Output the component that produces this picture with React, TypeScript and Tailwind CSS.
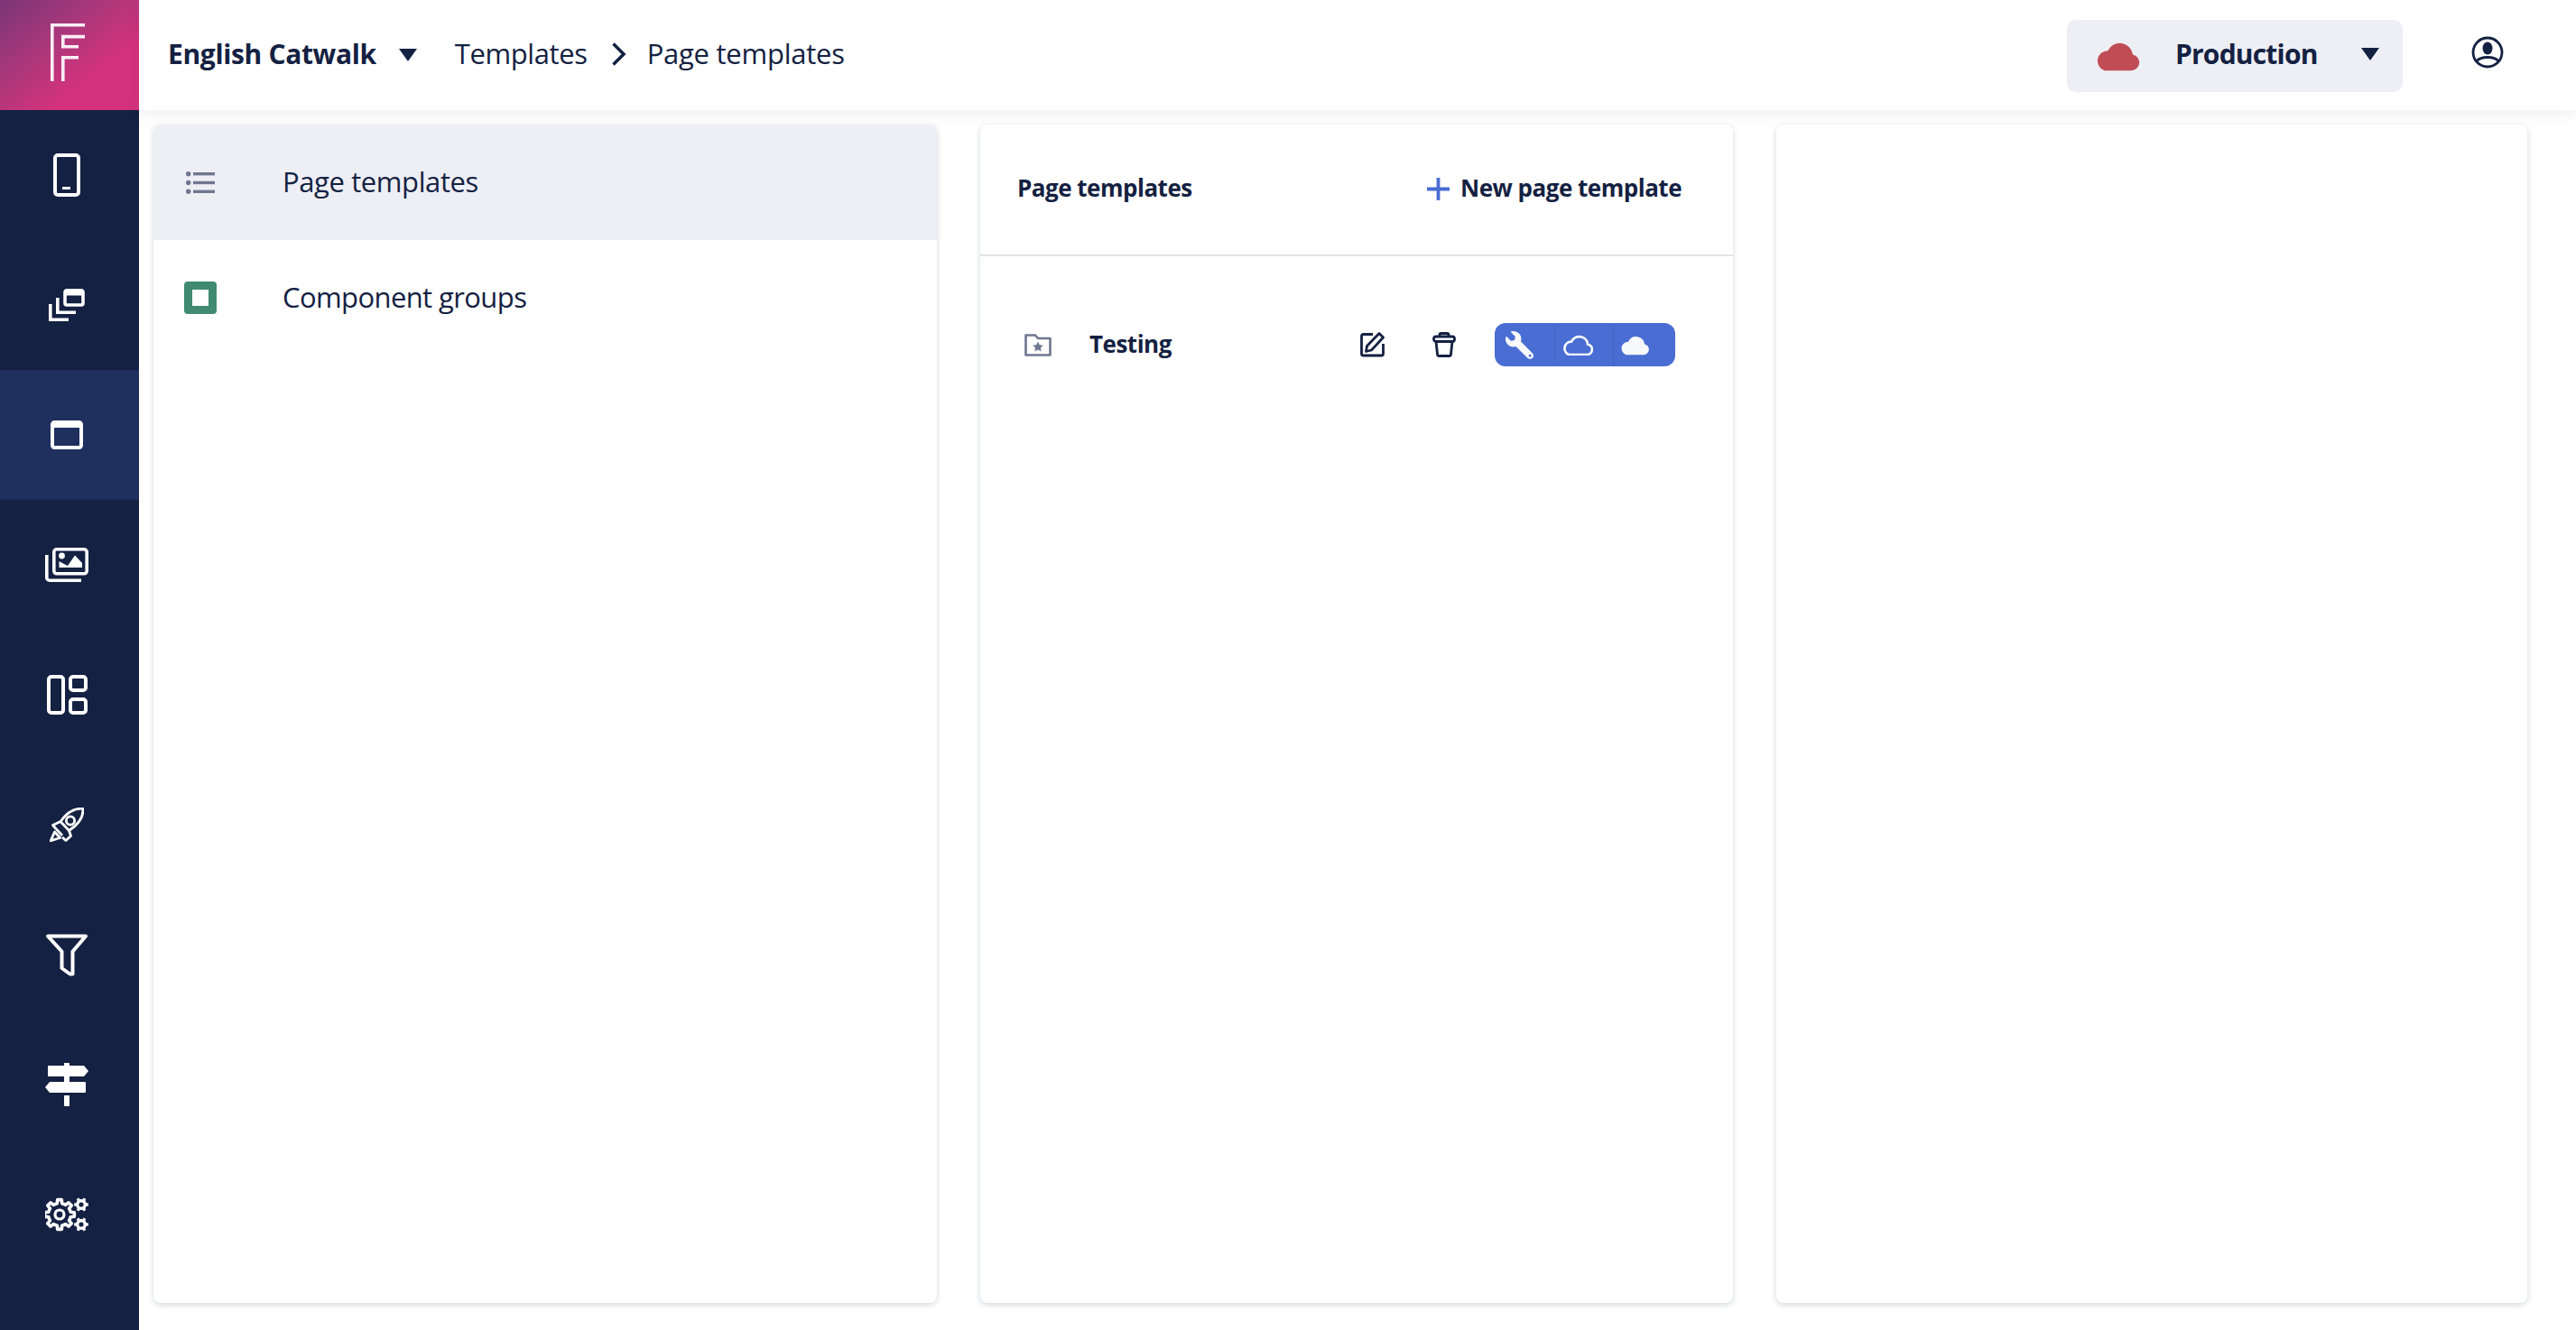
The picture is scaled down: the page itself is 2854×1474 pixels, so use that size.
import React from 'react';
import { FaWrench } from 'react-icons/fa';

const cloud = 'M7 20.5H25.5A5.5 5.5 0 0 0 26.5 9.6A9 9 0 0 0 9.4 6.9A7 7 0 0 0 7 20.5Z';

function gear(cx: number, cy: number, outer: number, inner: number, teeth: number) {
  const pts: string[] = [];
  const step = (Math.PI * 2) / teeth;
  for (let i = 0; i < teeth; i++) {
    const a = i * step;
    const corners: [number, number][] = [
      [inner, a - step * 0.5],
      [inner, a - step * 0.28],
      [outer, a - step * 0.18],
      [outer, a + step * 0.18],
      [inner, a + step * 0.28],
    ];
    corners.forEach(([r, t]) => pts.push(`${(cx + r * Math.cos(t)).toFixed(2)} ${(cy + r * Math.sin(t)).toFixed(2)}`));
  }
  return 'M' + pts.join('L') + 'Z';
}

function Logo() {
  return (
    <svg width="38" height="64" viewBox="0 0 38 64" fill="none" stroke="#fbeef5" strokeWidth="3.6">
      <path d="M1.8 64V1.8H38" />
      <path d="M38 14.6H13.8V25.8H31" />
      <path d="M13.8 64V37.8H31" />
    </svg>
  );
}

function Phone() {
  return (
    <svg width="30" height="48" viewBox="0 0 30 48" fill="none" stroke="white" strokeWidth="4">
      <rect x="2" y="2" width="26" height="44" rx="3" />
      <path d="M10 38.5H19" strokeWidth="3" />
    </svg>
  );
}

function Copies() {
  return (
    <svg width="40" height="36" viewBox="0 0 40 36" fill="none" stroke="white" strokeWidth="3.6">
      <rect x="18" y="2" width="20" height="16" rx="2" />
      <path d="M18 4H38" strokeWidth="7" />
      <path d="M9.8 10V26.2H30" />
      <path d="M1.8 17V34.2H22" />
    </svg>
  );
}

function Browser() {
  return (
    <svg width="36" height="32" viewBox="0 0 36 32" fill="none" stroke="white" strokeWidth="4">
      <rect x="2" y="2" width="32" height="28" rx="2.5" />
      <path d="M2 5H34" strokeWidth="6" />
    </svg>
  );
}

function Images() {
  return (
    <svg width="48" height="38" viewBox="0 0 48 38" fill="none" stroke="white" strokeWidth="3.6">
      <rect x="9.8" y="1.8" width="36.4" height="27" rx="3" />
      <path d="M1.8 8V33.2a3 3 0 0 0 3 3H40" />
      <circle cx="18.5" cy="9" r="3.4" fill="white" stroke="none" />
      <path d="M15.5 22V15L20 17.5L25 20L33 8.5L41 17V22Z" fill="white" stroke="none" />
    </svg>
  );
}

function Panels() {
  return (
    <svg width="45" height="44" viewBox="0 0 45 44" fill="none" stroke="white" strokeWidth="4">
      <rect x="2" y="2" width="16" height="40" rx="3" />
      <rect x="26" y="2" width="17" height="15" rx="3" />
      <rect x="26" y="27" width="17" height="15" rx="3" />
    </svg>
  );
}

function Rocket() {
  return (
    <svg width="38" height="38" viewBox="0 0 38 38" fill="none" stroke="white" strokeWidth="2.8" strokeLinejoin="round">
      <path d="M36.8 1.2C28 0.6 19 5.5 12 15.5L21.5 25.5C32 18.5 37.8 10 36.8 1.2Z" />
      <circle cx="23" cy="14.5" r="4.6" />
      <path d="M12 15.5L3.5 19.5L7 23.5" />
      <path d="M21.5 25.5L23.5 31.5L18 36.5L14 33" />
      <path d="M5.5 27L1.2 36.8L11.5 33.5Z" />
      <path d="M7 23.5L14 31" />
    </svg>
  );
}

function Funnel() {
  return (
    <svg width="48" height="47" viewBox="0 0 48 47" fill="none" stroke="white" strokeWidth="4" strokeLinejoin="round">
      <path d="M3 2.5H45L30.5 19.5V44.5H27.5L18.5 38V19.5Z" />
    </svg>
  );
}

function Signpost() {
  return (
    <svg width="48" height="48" viewBox="0 0 48 48" fill="white">
      <path d="M21 0H27V3H43L48 9L43 15H4a1 1 0 0 1-1-1V4a1 1 0 0 1 1-1H21Z" />
      <path d="M21 15H27V21H44a1 1 0 0 1 1 1V32a1 1 0 0 1-1 1H5L0 27L5 21H21Z" />
      <path d="M21 36H27V47a1 1 0 0 1-1 1H22a1 1 0 0 1-1-1Z" />
    </svg>
  );
}

function Gears() {
  return (
    <svg width="48" height="38" viewBox="0 0 48 38" fill="none">
      <path d={gear(16, 19, 16.5, 12.5, 8)} stroke="white" strokeWidth="3.6" strokeLinejoin="round" />
      <circle cx="16" cy="19" r="5" stroke="white" strokeWidth="3.2" />
      <path d={gear(40, 8, 8, 6, 6)} fill="white" />
      <circle cx="40" cy="8" r="2.6" fill="#142142" />
      <path d={gear(40, 30, 8, 6, 6)} fill="white" />
      <circle cx="40" cy="30" r="2.6" fill="#142142" />
    </svg>
  );
}

function Triangle() {
  return (
    <svg width="20" height="14" viewBox="0 0 20 14" fill="#142142">
      <path d="M0 0H20L10 14Z" />
    </svg>
  );
}

function Chevron() {
  return (
    <svg width="17" height="26" viewBox="0 0 17 26" fill="none" stroke="#142142" strokeWidth="3.6">
      <path d="M2.5 1.5L14 13L2.5 24.5" />
    </svg>
  );
}

function UserIcon() {
  return (
    <svg width="36" height="36" viewBox="0 0 36 36" fill="none" stroke="#142142" strokeWidth="2.8">
      <circle cx="18" cy="18" r="16" />
      <ellipse cx="18" cy="13.5" rx="5.5" ry="7" fill="#142142" stroke="none" />
      <path d="M5.5 28C9 24 14 23.5 18 23.5C22 23.5 27 24 30.5 28" />
    </svg>
  );
}

function ListIcon() {
  return (
    <svg width="32" height="25" viewBox="0 0 32 25" fill="#6f7690">
      <circle cx="2.7" cy="2.7" r="2.7" />
      <circle cx="2.7" cy="12.5" r="2.7" />
      <circle cx="2.7" cy="22.3" r="2.7" />
      <rect x="8" y="1" width="24" height="3.4" />
      <rect x="8" y="10.8" width="24" height="3.4" />
      <rect x="8" y="20.6" width="24" height="3.4" />
    </svg>
  );
}

function FolderStar() {
  return (
    <svg width="30" height="25" viewBox="0 0 30 25" fill="none" stroke="#6f7690" strokeWidth="2.6" strokeLinejoin="round">
      <path d="M1.5 23.5V1.5H12L15 5H28.5V23.5Z" />
      <path d="M15 8.5L16.8 12.2L20.8 12.7L17.9 15.5L18.6 19.5L15 17.6L11.4 19.5L12.1 15.5L9.2 12.7L13.2 12.2Z" fill="#6f7690" stroke="none" />
    </svg>
  );
}

function EditIcon() {
  return (
    <svg width="27" height="28" viewBox="0 0 27 28" fill="none" stroke="#142142" strokeWidth="2.8" strokeLinejoin="round">
      <path d="M14 2.5H3.5a2 2 0 0 0-2 2V24a2 2 0 0 0 2 2H23.5a2 2 0 0 0 2-2V13" />
      <path d="M21 1.5L25.5 6L12.5 20L6.5 21.5L7.5 15.5Z" />
    </svg>
  );
}

function TrashIcon() {
  return (
    <svg width="26" height="28" viewBox="0 0 26 28" fill="none" stroke="#142142" strokeWidth="2.8" strokeLinejoin="round">
      <path d="M8 5V3a1.5 1.5 0 0 1 1.5-1.5H16.5A1.5 1.5 0 0 1 18 3V5" />
      <rect x="1.5" y="5" width="23" height="5.5" rx="2.5" />
      <path d="M4 10.5L5.5 24.5a2 2 0 0 0 2 2H18.5a2 2 0 0 0 2-2L22 10.5" />
    </svg>
  );
}

const navItems = [
  { icon: <Phone /> },
  { icon: <Copies /> },
  { icon: <Browser />, active: true },
  { icon: <Images /> },
  { icon: <Panels /> },
  { icon: <Rocket /> },
  { icon: <Funnel /> },
  { icon: <Signpost /> },
  { icon: <Gears /> },
];

export default function App() {
  return (
    <div className="flex h-[1474px] w-[2854px] overflow-hidden bg-white font-['Open_Sans',sans-serif] text-[#142142]">
      {/* Sidebar */}
      <aside className="flex h-full w-[154px] shrink-0 flex-col bg-[#142142]">
        <div className="flex h-[122px] items-center justify-center bg-gradient-to-br from-[#7a3577] from-0% via-[#d6317c] via-70% to-[#d6317c] pb-[6px] pr-[4px]">
          <Logo />
        </div>
        {navItems.map((item, i) => (
          <div
            key={i}
            className={item.active ? 'flex h-[144px] items-center justify-center bg-[#1f2f5e] pr-[6px]' : 'flex h-[144px] items-center justify-center pr-[6px]'}
          >
            {item.icon}
          </div>
        ))}
      </aside>

      <div className="flex min-w-0 flex-1 flex-col">
        {/* Top bar */}
        <header className="relative z-10 flex h-[122px] shrink-0 items-center bg-white pl-[32px] shadow-[0_4px_16px_rgba(20,33,66,0.07)]">
          <span className="mb-[3px] text-[30px] font-bold leading-none tracking-[-0.35px]">English Catwalk</span>
          <span className="ml-[25px]"><Triangle /></span>
          <span className="mb-[3px] ml-[42px] text-[31px] leading-none tracking-[-0.4px]">Templates</span>
          <span className="mb-[3px] ml-[26px]"><Chevron /></span>
          <span className="mb-[3px] ml-[23px] text-[31px] leading-none tracking-[-0.25px]">Page templates</span>
          <button className="ml-auto mt-[2px] flex h-[80px] w-[372px] items-center rounded-[10px] bg-[#eeeff5] pl-[30px] pr-[26px]">
            <svg width="52" height="34" viewBox="0 0 32 21" fill="#c04d55"><path d={cloud} /></svg>
            <span className="mb-[4px] ml-[38px] text-[30px] font-bold leading-none tracking-[-0.8px]">Production</span>
            <span className="mb-[4px] ml-auto"><Triangle /></span>
          </button>
          <span className="mb-[6px] ml-[76px] mr-[80px]"><UserIcon /></span>
        </header>

        {/* Panels */}
        <main className="flex min-h-0 flex-1 gap-[48px] pb-[30px] pl-[16px] pr-[54px] pt-[16px]">
          <section className="w-[868px] overflow-hidden rounded-[8px] bg-white shadow-[0_2px_6px_rgba(20,33,66,0.18)]">
            <div className="flex h-[128px] items-center bg-[#eeeff5] pl-[36px]">
              <ListIcon />
              <span className="mb-[2px] ml-[75px] text-[31px] leading-none tracking-[-0.4px]">Page templates</span>
            </div>
            <div className="flex h-[128px] items-center pl-[34px]">
              <div className="flex h-[36px] w-[36px] items-center justify-center rounded-[4px] bg-[#3f8a71]">
                <div className="h-[18px] w-[18px] bg-white" />
              </div>
              <span className="mb-[2px] ml-[73px] text-[31px] leading-none tracking-[-0.6px]">Component groups</span>
            </div>
          </section>

          <section className="w-[834px] rounded-[8px] bg-white shadow-[0_2px_6px_rgba(20,33,66,0.18)]">
            <div className="flex h-[146px] items-center justify-between border-b-2 border-[#e4e4e7] pl-[41px] pr-[57px]">
              <span className="mb-[4px] text-[26px] font-bold leading-none tracking-[-0.5px]">Page templates</span>
              <span className="mb-[2px] flex items-center">
                <svg width="25" height="25" viewBox="0 0 25 25" stroke="#4a6dd3" strokeWidth="3.8"><path d="M12.5 0V25M0 12.5H25" /></svg>
                <span className="mb-[2px] ml-[12px] text-[26px] font-bold leading-none tracking-[-0.5px]">New page template</span>
              </span>
            </div>
            <div className="flex h-[196px] items-center pl-[49px]">
              <FolderStar />
              <span className="mb-[2px] ml-[42px] w-[300px] text-[26px] font-bold leading-none tracking-[-0.5px]">Testing</span>
              <EditIcon />
              <span className="ml-[53px]"><TrashIcon /></span>
              <div className="ml-[43px] flex h-[48px] w-[200px] items-center rounded-[12px] bg-[#4a6dd3]">
                <div className="flex h-full w-[67px] items-center justify-center border-r border-[#4565c4] pr-[12px]">
                  <FaWrench className="-scale-x-100 text-[31px] text-[#f7f9fd]" />
                </div>
                <div className="flex h-full w-[65px] items-center justify-center border-r border-[#4565c4] pr-[15px]">
                  <svg width="34" height="23" viewBox="0 0 32 21" fill="none" stroke="#f7f9fd" strokeWidth="2.6"><path d={cloud} /></svg>
                </div>
                <div className="flex h-full w-[68px] items-center justify-center pr-[22px]">
                  <svg width="34" height="23" viewBox="0 0 32 21" fill="#f7f9fd"><path d={cloud} /></svg>
                </div>
              </div>
            </div>
          </section>

          <section className="w-[832px] rounded-[8px] bg-white shadow-[0_2px_6px_rgba(20,33,66,0.18)]" />
        </main>
      </div>
    </div>
  );
}
